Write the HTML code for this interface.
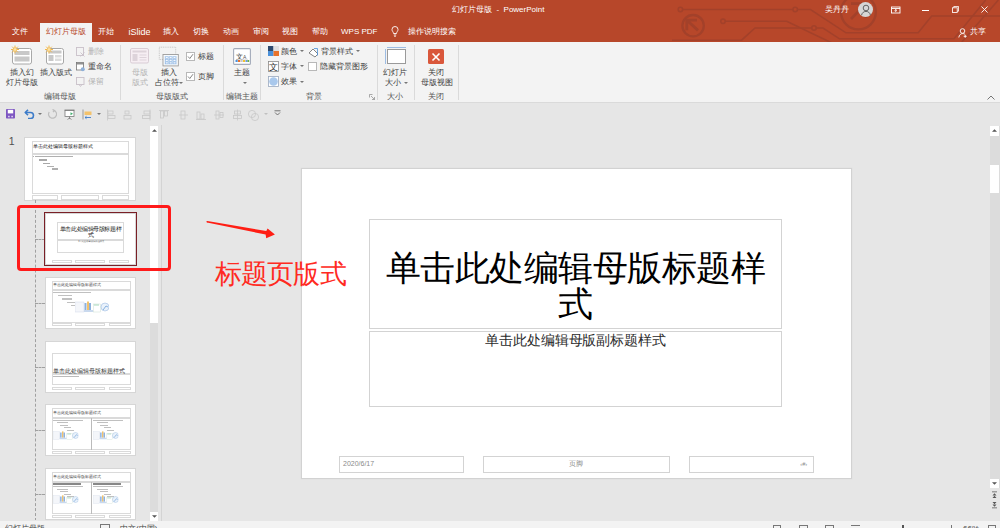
<!DOCTYPE html>
<html><head><meta charset="utf-8">
<style>
*{box-sizing:border-box;margin:0;padding:0}
html,body{width:1000px;height:528px;overflow:hidden;background:#E6E6E6;font-family:"Liberation Sans",sans-serif;color:#444}
.a{position:absolute;white-space:nowrap}
#top{position:absolute;left:0;top:0;width:1000px;height:42px;background:#B7472A;overflow:hidden}
#ribbon{position:absolute;left:0;top:42px;width:1000px;height:61px;background:#F3F3F3;border-bottom:1px solid #DADADA}
#qat{position:absolute;left:0;top:103px;width:1000px;height:22px;background:#E6E6E6}
#status{position:absolute;left:0;top:521px;width:1000px;height:7px;background:#F3F3F3}
.tab{position:absolute;top:26px;font-size:8px;line-height:12px;color:#fff}
.t8{font-size:8px;line-height:10px}
.sep{position:absolute;width:1px;background:#DADADA}
.glabel{position:absolute;top:49px;font-size:8px;line-height:11px;color:#555}
.dis{color:#B4B4B4}
.dd{display:inline-block;width:0;height:0;border-left:2px solid transparent;border-right:2px solid transparent;border-top:2px solid #777;vertical-align:middle;margin-left:1px}
#slide{position:absolute;left:301.5px;top:169px;width:549px;height:309px;background:#fff;box-shadow:0 0 1px 1px #D2D2D2}
.dot{position:absolute;border:1px solid #D3D3D3}
.thumb{position:absolute;background:#fff;box-shadow:0 0 0 1px #D6D6D6;overflow:hidden}
.thumb .dot{border:1px solid #DADADA}
.tt{position:absolute;white-space:nowrap;color:#777;line-height:4px}
</style></head><body>

<div id="top">
  <svg class="a" style="left:0;top:0" width="1000" height="42" viewBox="0 0 1000 42" fill="none" stroke="#A3412A" stroke-width="1.6">
    <circle cx="680.4" cy="9.5" r="2.2"/><path d="M682.6 9.5H793"/><circle cx="795.2" cy="9.5" r="2.2"/><path d="M797.4 9.5H810.5L846 32.8H918.2L931.7 16H1000"/>
    <circle cx="693.1" cy="25.7" r="10.7" stroke-width="2.3"/><path d="M687.2 20.5L698 30.4M686.8 30.2V20.1H697" stroke-width="2.8"/>
    <circle cx="723" cy="21.3" r="2.2"/><path d="M725.2 21.3H786.7L832 43"/>
    <path d="M672 40.2H741.6L755 28H811.8"/><circle cx="814" cy="28" r="2.2"/><path d="M816.2 28H823L839.5 38.8H954L985.7 0"/>
    <circle cx="858.4" cy="12" r="17.4" stroke-width="2.4"/><path d="M851 3.6H866V18M866 3.6L851 19" stroke-width="2.6"/>
    <path d="M961.8 42L998.4 0"/>
  </svg>
  <div class="a" style="left:452px;top:4px;font-size:8px;line-height:12px;color:#fff">幻灯片母版&nbsp; - &nbsp;PowerPoint</div>
  <div class="a" style="left:825px;top:4px;font-size:8px;line-height:12px;color:#fff">吴丹丹</div>
  <div class="a" style="left:858px;top:2px;width:15.4px;height:15.4px;border-radius:50%;background:#D6D6D6"></div>
  <svg class="a" style="left:858px;top:2px" width="16" height="16" viewBox="0 0 16 16" fill="none" stroke="#555" stroke-width="0.9"><circle cx="8" cy="6" r="2.8"/><path d="M3.5 13.2C4.2 10.5 6 9.4 8 9.4S11.8 10.5 12.5 13.2"/></svg>
  <svg class="a" style="left:890.5px;top:6px" width="10" height="8" viewBox="0 0 10 8" fill="none" stroke="#fff" stroke-width="0.9"><rect x="0.5" y="1" width="8.5" height="6"/><path d="M0.5 2.5h8.5M4.75 3.5v2.5M3.5 4.7l1.25-1.2 1.25 1.2"/></svg>
  <div class="a" style="left:922px;top:9.8px;width:7px;height:0.8px;background:#fff"></div>
  <svg class="a" style="left:952px;top:6.3px" width="7" height="7" viewBox="0 0 7 7" fill="none" stroke="#fff" stroke-width="0.85"><rect x="0.45" y="1.8" width="4.75" height="4.75"/><path d="M1.8 1.8V0.45H6.55V5.2H5.2"/></svg>
  <svg class="a" style="left:981.3px;top:6.2px" width="7" height="7" viewBox="0 0 8 8" stroke="#fff" stroke-width="1"><path d="M0.5 0.5L7.5 7.5M7.5 0.5L0.5 7.5"/></svg>
  <svg class="a" style="left:958px;top:27.5px" width="10" height="10" viewBox="0 0 10 10" fill="none" stroke="#fff" stroke-width="0.9"><circle cx="4.5" cy="3" r="2.3"/><path d="M0.8 9.5C1.2 7 2.8 5.6 4.5 5.6S6.5 6 7 6.5M7.2 6.8v3M5.7 8.3h3"/></svg>
  <div class="a" style="left:969.5px;top:26px;font-size:8px;line-height:12px;color:#fff">共享</div>

  <div class="a" style="left:39.5px;top:22.5px;width:52.5px;height:20px;background:#F3F3F3"></div>
  <div class="tab" style="left:11.5px">文件</div>
  <div class="tab" style="left:46px;color:#B7472A">幻灯片母版</div>
  <div class="tab" style="left:98px">开始</div>
  <div class="tab" style="left:128.5px;font-size:9px">iSlide</div>
  <div class="tab" style="left:163px">插入</div>
  <div class="tab" style="left:193px">切换</div>
  <div class="tab" style="left:223px">动画</div>
  <div class="tab" style="left:253px">审阅</div>
  <div class="tab" style="left:282px">视图</div>
  <div class="tab" style="left:312px">帮助</div>
  <div class="tab" style="left:341px">WPS PDF</div>
  <svg class="a" style="left:391px;top:26px" width="8" height="11" viewBox="0 0 8 11" fill="none" stroke="#fff" stroke-width="0.9"><path d="M2.5 7.5C2.5 6 1 5.2 1 3.5A3 3 0 0 1 7 3.5C7 5.2 5.5 6 5.5 7.5Z"/><path d="M2.8 9H5.2M3.2 10.3H4.8"/></svg>
  <div class="tab" style="left:408px">操作说明搜索</div>
</div>
<div id="ribbon">
  <!-- group 1 -->
  <svg class="a" style="left:10px;top:3px" width="24" height="20" viewBox="0 0 24 20">
    <rect x="2.5" y="3.5" width="19" height="15.5" rx="2" fill="#fff" stroke="#A8A8A8"/>
    <rect x="4.5" y="6" width="15" height="4" fill="#C8C8C8"/><rect x="4.5" y="11.5" width="15" height="5" fill="#C8C8C8"/>
    <g stroke="#F2B84B" stroke-width="1"><path d="M5 0.5v8M1 4.5h8M2.2 1.7l5.6 5.6M7.8 1.7l-5.6 5.6"/></g><circle cx="5" cy="4.5" r="1.8" fill="#FBE3A8" stroke="#F2B84B" stroke-width="0.6"/>
  </svg>
  <svg class="a" style="left:44px;top:3px" width="22" height="20" viewBox="0 0 22 20">
    <rect x="2.5" y="3.5" width="17" height="15.5" rx="2" fill="#fff" stroke="#A8A8A8"/>
    <rect x="4.5" y="5.5" width="13" height="3" fill="#C8C8C8"/><rect x="4.5" y="10" width="5" height="6" fill="#C8C8C8"/><rect x="11" y="10" width="6.5" height="2.5" fill="#DCDCDC"/><rect x="11" y="13.5" width="6.5" height="2.5" fill="#DCDCDC"/>
    <g stroke="#F2B84B" stroke-width="1"><path d="M5 0.5v8M1 4.5h8M2.2 1.7l5.6 5.6M7.8 1.7l-5.6 5.6"/></g><circle cx="5" cy="4.5" r="1.8" fill="#FBE3A8" stroke="#F2B84B" stroke-width="0.6"/>
  </svg>
  <div class="a t8" style="left:10px;top:26px">插入幻</div>
  <div class="a t8" style="left:6px;top:36px">灯片母版</div>
  <div class="a t8" style="left:40px;top:26px">插入版式</div>
  <svg class="a" style="left:76px;top:5px" width="10" height="10" viewBox="0 0 10 10" fill="none" stroke="#C9C0C9" stroke-width="0.9"><rect x="0.5" y="0.5" width="7" height="8"/><path d="M4.5 5.5l4 4M8.5 5.5l-4 4"/></svg>
  <div class="a t8 dis" style="left:88px;top:5px">删除</div>
  <svg class="a" style="left:76px;top:20px" width="10" height="10" viewBox="0 0 10 10" fill="none" stroke="#777" stroke-width="0.8"><rect x="0.5" y="0.5" width="7" height="7.5" fill="#fff"/><path d="M0.5 1.8h7" stroke-width="1.2"/><circle cx="6.8" cy="7.3" r="2" fill="#8FB0D8" stroke="none"/></svg>
  <div class="a t8" style="left:88px;top:20px;color:#3C3C3C">重命名</div>
  <svg class="a" style="left:76px;top:35px" width="10" height="10" viewBox="0 0 10 10" fill="none" stroke="#C9C0C9" stroke-width="0.9"><rect x="0.5" y="0.5" width="7.5" height="7"/><path d="M3 7.5l1.5 2 1.5-2"/></svg>
  <div class="a t8 dis" style="left:88px;top:34.5px">保留</div>
  <div class="glabel" style="left:44px">编辑母版</div>
  <div class="sep" style="left:120px;top:3px;height:55px"></div>

  <!-- group 2 -->
  <svg class="a" style="left:130px;top:6px" width="20" height="16" viewBox="0 0 20 16"><rect x="0.5" y="0.5" width="18" height="14.5" rx="1.5" fill="#F6EEF3" stroke="#D9CDD5"/><rect x="2.5" y="2.5" width="14" height="2" fill="#DDD3DA"/><rect x="2.5" y="6" width="5" height="7" fill="#DDD3DA"/><path d="M9.5 7h7M9.5 9.5h7M9.5 12h7" stroke="#DDD3DA"/></svg>
  <div class="a t8 dis" style="left:132px;top:26px">母版</div>
  <div class="a t8 dis" style="left:132px;top:36px">版式</div>
  <svg class="a" style="left:158px;top:3.5px" width="22" height="21" viewBox="0 0 22 21"><rect x="1.3" y="1.2" width="16.4" height="12.3" fill="none" stroke="#B4B4B4" stroke-width="0.7" stroke-dasharray="1 0.8"/><rect x="5" y="8.5" width="15.3" height="11.4" fill="#fff" stroke="#9A9A9A" stroke-width="0.9"/><rect x="6.3" y="9.8" width="12.7" height="8.8" fill="#DDEAF7"/><g fill="#fff" stroke="#8DB4E2" stroke-width="0.6"><rect x="7.3" y="10.8" width="2.8" height="1.8"/><rect x="11.2" y="10.8" width="2.8" height="1.8"/><rect x="15.1" y="10.8" width="2.8" height="1.8"/><rect x="7.3" y="13.4" width="2.8" height="1.8"/><rect x="11.2" y="13.4" width="2.8" height="1.8"/><rect x="15.1" y="13.4" width="2.8" height="1.8"/><rect x="7.3" y="16" width="2.8" height="1.8"/><rect x="11.2" y="16" width="2.8" height="1.8"/><rect x="15.1" y="16" width="2.8" height="1.8"/></g></svg>
  <div class="a t8" style="left:161px;top:26px;color:#3C3C3C">插入</div>
  <div class="a t8" style="left:155px;top:36px;color:#3C3C3C">占位符<i class="dd" style="margin-left:0"></i></div>
  <div class="a" style="left:186.3px;top:10.3px;width:8.5px;height:8.5px;background:#fff;border:1px solid #B8B8B8"></div>
  <svg class="a" style="left:187px;top:11px" width="7" height="7" viewBox="0 0 7 7" fill="none" stroke="#666" stroke-width="0.8"><path d="M1 3.5l1.8 2L6 1.2"/></svg>
  <div class="a t8" style="left:198px;top:10px;color:#3C3C3C">标题</div>
  <div class="a" style="left:186.3px;top:30.3px;width:8.5px;height:8.5px;background:#fff;border:1px solid #B8B8B8"></div>
  <svg class="a" style="left:187px;top:31px" width="7" height="7" viewBox="0 0 7 7" fill="none" stroke="#666" stroke-width="0.8"><path d="M1 3.5l1.8 2L6 1.2"/></svg>
  <div class="a t8" style="left:198px;top:30px;color:#3C3C3C">页脚</div>
  <div class="glabel" style="left:156px">母版版式</div>
  <div class="sep" style="left:223px;top:3px;height:55px"></div>

  <!-- group 3 -->
  <svg class="a" style="left:233px;top:5.5px" width="18" height="17" viewBox="0 0 18 17"><rect x="0.6" y="0.6" width="16.8" height="15.8" rx="1" fill="#fff" stroke="#A3ABBA" stroke-width="1.1"/><text x="3" y="10.5" font-size="6.5" fill="#333" font-family="Liberation Sans">文</text><text x="10" y="10.5" font-size="5" fill="#555" font-family="Liberation Sans">A</text><path d="M3 11.3h12" stroke="#BBB" stroke-width="0.5"/><g><rect x="2.5" y="12" width="2.2" height="2" fill="#4A90D9"/><rect x="5" y="12" width="2.2" height="2" fill="#E8722A"/><rect x="7.5" y="12" width="2.2" height="2" fill="#C8C8C8"/><rect x="10" y="12" width="2.2" height="2" fill="#F2C12E"/><rect x="12.5" y="12" width="2.2" height="2" fill="#6A9BE0"/><rect x="14.6" y="12" width="1.6" height="2" fill="#6CB33F"/></g></svg>
  <div class="a t8" style="left:234px;top:26px;color:#3C3C3C">主题</div>
  <i class="dd a" style="left:241.5px;top:40px"></i>
  <div class="glabel" style="left:226px">编辑主题</div>
  <div class="sep" style="left:260px;top:3px;height:55px"></div>

  <!-- group 4 -->
  <svg class="a" style="left:268px;top:4px" width="11" height="10" viewBox="0 0 11 10"><rect x="0" y="0" width="5.5" height="5" fill="#2E4A6E"/><rect x="5.5" y="0" width="5.5" height="5" fill="#E0E0E0"/><rect x="0" y="5" width="5.5" height="5" fill="#4A90D9"/><rect x="5.5" y="5" width="5.5" height="5" fill="#E8722A"/></svg>
  <div class="a t8" style="left:280.5px;top:4.5px;color:#3C3C3C">颜色 <i class="dd"></i></div>
  <svg class="a" style="left:268px;top:18.5px" width="11" height="11" viewBox="0 0 11 11"><rect x="0.5" y="0.5" width="10" height="10" fill="#fff" stroke="#8A8A8A" stroke-width="0.8"/><text x="1.3" y="9" font-size="8.5" fill="#333" font-family="Liberation Sans">文</text></svg>
  <div class="a t8" style="left:280.5px;top:19.5px;color:#3C3C3C">字体 <i class="dd"></i></div>
  <svg class="a" style="left:268px;top:34px" width="11" height="11" viewBox="0 0 11 11"><rect x="0.5" y="0.5" width="10" height="10" fill="#fff" stroke="#9AA9BF" stroke-width="0.8"/><circle cx="5.5" cy="5.5" r="4.3" fill="#A9C8EC"/></svg>
  <div class="a t8" style="left:280.5px;top:34.8px;color:#3C3C3C">效果 <i class="dd"></i></div>
  <svg class="a" style="left:307.5px;top:4.5px" width="12" height="11" viewBox="0 0 12 11" fill="none" stroke="#666" stroke-width="0.8"><path d="M1 6l4-4 5 5-3 3z" fill="#fff"/><path d="M6 1.5h3.5v7" stroke="#4A90D9"/></svg>
  <div class="a t8" style="left:320.5px;top:4.5px;color:#3C3C3C">背景样式 <i class="dd"></i></div>
  <div class="a" style="left:308px;top:20px;width:9px;height:9px;background:#fff;border:1px solid #B8B8B8"></div>
  <div class="a t8" style="left:320px;top:19.5px;color:#3C3C3C">隐藏背景图形</div>
  <div class="glabel" style="left:305.5px">背景</div>
  <svg class="a" style="left:368.5px;top:52px" width="6" height="6" viewBox="0 0 6 6" fill="none" stroke="#888" stroke-width="0.7"><path d="M0.5 0.5h3M0.5 0.5v3M2 2l3.5 3.5M5.5 3v2.5H3"/></svg>
  <div class="sep" style="left:376.5px;top:3px;height:55px"></div>

  <!-- group 5 -->
  <div class="a" style="left:386.5px;top:6.5px;width:19.5px;height:15px;background:#fff;border:1px solid #9A9A9A"></div>
  <div class="a" style="left:386.5px;top:4.5px;width:19px;height:1px;background:#9DBCE3"></div>
  <div class="a" style="left:385px;top:6.5px;width:1px;height:15px;background:#9DBCE3"></div>
  <div class="a t8" style="left:383px;top:26px;color:#3C3C3C">幻灯片</div>
  <div class="a t8" style="left:385px;top:36px;color:#3C3C3C">大小 <i class="dd"></i></div>
  <div class="glabel" style="left:387px">大小</div>
  <div class="sep" style="left:413.5px;top:3px;height:55px"></div>

  <!-- group 6 -->
  <div class="a" style="left:428px;top:6.5px;width:16px;height:15.5px;background:#D9573B;border-radius:1.5px"></div>
  <svg class="a" style="left:428px;top:6.5px" width="16" height="16" viewBox="0 0 16 16" stroke="#fff" stroke-width="1.6"><path d="M4.5 4.5l7 7M11.5 4.5l-7 7"/></svg>
  <div class="a t8" style="left:428px;top:26px;color:#3C3C3C">关闭</div>
  <div class="a t8" style="left:420.5px;top:36px;color:#3C3C3C">母版视图</div>
  <div class="glabel" style="left:428px">关闭</div>
  <div class="sep" style="left:457.5px;top:3px;height:55px"></div>

  <svg class="a" style="left:987px;top:53px" width="8" height="5" viewBox="0 0 8 5" fill="none" stroke="#666" stroke-width="0.9"><path d="M0.5 4.5L4 1l3.5 3.5"/></svg>
</div>
<div id="qat">
  <svg class="a" style="left:5.5px;top:6px" width="9" height="10" viewBox="0 0 9 10"><rect x="0" y="0" width="9" height="9.5" rx="0.8" fill="#7E57C2"/><rect x="1.8" y="0.8" width="5.4" height="3.6" fill="#fff"/><rect x="2.3" y="6.8" width="1.2" height="1.5" fill="#fff"/><rect x="5.5" y="6.8" width="1.2" height="1.5" fill="#fff"/></svg>
  <svg class="a" style="left:23.5px;top:6px" width="11" height="10" viewBox="0 0 11 10" fill="none" stroke="#3D7CC9" stroke-width="1.6"><path d="M1.5 3.5H6.5A3 3 0 0 1 6.5 9.5H4"/><path d="M4 0.8L1.2 3.5 4 6.2" stroke-linejoin="round"/></svg>
  <i class="dd a" style="left:37px;top:113px;top:10px"></i>
  <svg class="a" style="left:47px;top:6px" width="10" height="10" viewBox="0 0 10 10" fill="none" stroke="#BDBDBD" stroke-width="1.2"><path d="M6.5 1.3A4 4 0 1 1 2.2 3"/><path d="M5.5 0.5L7.5 1.5 6 3.2"/></svg>
  <svg class="a" style="left:64px;top:5.5px" width="11" height="11" viewBox="0 0 11 11" fill="none" stroke="#7A7A7A" stroke-width="0.8"><rect x="1" y="1.5" width="9" height="6" fill="#fff"/><path d="M0.5 1h10M5.5 7.5v2.5M3.5 10.5l2-1.5 2 1.5"/><path d="M6.5 3.2l2.5 1.5-2.5 1.5z" fill="#3FAF6E" stroke="none"/></svg>
  <svg class="a" style="left:81.5px;top:5.5px" width="10" height="11" viewBox="0 0 10 11"><rect x="0.5" y="0.5" width="1" height="10" fill="#999"/><rect x="2.5" y="2.5" width="7" height="3.5" fill="#F3C26B"/><path d="M3 8.5h6M3 8.5l1.5-1.2M3 8.5l1.5 1.2" stroke="#3D7CC9" stroke-width="0.9" fill="none"/></svg>
  <i class="dd a" style="left:95.5px;top:10px"></i>
  <g></g>
  <svg class="a" style="left:106px;top:5.5px" width="180" height="12" viewBox="0 0 180 12" fill="none" stroke="#C8C8C8" stroke-width="0.8">
    <path d="M1.5 0.5v11"/><rect x="2" y="2" width="5" height="3"/><rect x="2" y="6.5" width="7" height="3"/>
    <rect x="19" y="2" width="4" height="3"/><rect x="18" y="6.5" width="7" height="3.5"/>
    <path d="M44 0.5v11"/><rect x="38" y="2" width="6" height="3"/><rect x="36.5" y="6.5" width="7.5" height="3"/>
    <path d="M53 1.5h10"/><rect x="54.5" y="2" width="3" height="7"/><rect x="58.5" y="2" width="3" height="5"/>
    <path d="M73 6h9"/><rect x="75" y="2" width="4" height="8"/>
    <path d="M90 10.5h10"/><rect x="91" y="3" width="3" height="7"/><rect x="95" y="5" width="3" height="5"/>
    <path d="M108 6h10"/><rect x="110" y="2" width="3" height="8"/><rect x="114" y="3.5" width="3" height="5"/>
    <path d="M131.5 0.5v11"/><rect x="128.5" y="2" width="6" height="3"/><rect x="127.5" y="6.5" width="8" height="3"/>
    <circle cx="146" cy="5" r="3.6"/><circle cx="149" cy="8" r="3.6"/>
  </svg>
  <i class="dd a" style="left:262.5px;top:10px;border-top-color:#C0C0C0"></i>
  <svg class="a" style="left:273.5px;top:7px" width="7" height="6" viewBox="0 0 7 6" fill="none" stroke="#555" stroke-width="0.8"><path d="M0.5 0.8h6"/><path d="M1 2.5L3.5 5 6 2.5"/></svg>
</div>

<!-- slide panel -->
<div class="a" style="left:8.8px;top:133.5px;font-size:10.5px;line-height:14px;color:#505050">1</div>
<div class="thumb" style="left:24.5px;top:137.5px;width:110.5px;height:62.5px">
  <div class="dot" style="left:7px;top:3.8px;width:97px;height:12.5px"></div>
  <div class="a" style="left:8px;top:5.8px;font-size:5.3px;line-height:7px;color:#222">单击此处编辑母版标题样式</div>
  <div class="dot" style="left:7px;top:16.3px;width:97px;height:40.5px"></div>
  <div class="a" style="left:8.5px;top:18px;width:1px;height:1px;background:#B0B0B0"></div>
  <div class="a" style="left:10.75px;top:18px;width:38px;height:1.5px;background:#B0B0B0"></div>
  <div class="a" style="left:14.75px;top:21.5px;width:8px;height:1.5px;background:#A8A8A8"></div>
  <div class="a" style="left:18.5px;top:25px;width:7px;height:1.5px;background:#A8A8A8"></div>
  <div class="a" style="left:22.75px;top:28px;width:6.5px;height:1.5px;background:#B0B0B0"></div>
  <div class="a" style="left:27px;top:30.5px;width:6.5px;height:1.5px;background:#B0B0B0"></div>
  <div class="dot" style="left:7px;top:57px;width:26.5px;height:5px"></div>
  <div class="dot" style="left:36.5px;top:57px;width:37.5px;height:5px"></div>
  <div class="dot" style="left:77.5px;top:57px;width:27px;height:5px"></div>
</div>
<div class="a" style="left:35px;top:200px;width:0;height:321px;border-left:1px dashed #A0A0A0"></div>
<div class="a" style="left:35px;top:238.5px;width:10px;height:0;border-top:1px dashed #A0A0A0"></div>
<div class="a" style="left:35px;top:302.5px;width:10px;height:0;border-top:1px dashed #A0A0A0"></div>
<div class="a" style="left:35px;top:366.5px;width:10px;height:0;border-top:1px dashed #A0A0A0"></div>
<div class="a" style="left:35px;top:430px;width:10px;height:0;border-top:1px dashed #A0A0A0"></div>
<div class="a" style="left:35px;top:494px;width:10px;height:0;border-top:1px dashed #A0A0A0"></div>
<div class="a" style="left:43.8px;top:211.8px;width:93.4px;height:54.2px;border:2.4px solid #7A1F26;background:#fff"></div>
<div class="thumb" style="left:46px;top:214px;width:89px;height:50px">
  <div class="dot" style="left:11px;top:8px;width:67px;height:18px"></div>
  <div class="dot" style="left:11px;top:26.3px;width:67px;height:12.3px"></div>
  <div class="a" style="left:11px;top:11.6px;width:67px;text-align:center;font-size:6px;line-height:7px;color:#222;white-space:normal;transform:scale(0.93);transform-origin:50% 0">单击此处编辑母版标题样<br>式</div>
  <div class="a" style="left:11px;top:26.3px;width:67px;text-align:center;font-size:2.15px;line-height:3.5px;color:#555">单击此处编辑母版副标题样式</div>
  <div class="dot" style="left:6px;top:46.4px;width:20px;height:3px"></div>
  <div class="dot" style="left:29px;top:46.4px;width:30px;height:3px"></div>
  <div class="dot" style="left:62.5px;top:46.4px;width:20px;height:3px"></div>
</div><div class="thumb" style="left:46px;top:277.5px;width:89px;height:50px">
  <div class="dot" style="left:5.5px;top:3px;width:79px;height:9.5px"></div>
  <div class="a" style="left:7px;top:4.5px;font-size:4.3px;line-height:6px;color:#444">单击此处编辑母版标题样式</div>
  <div class="dot" style="left:5.5px;top:12.5px;width:79px;height:32.5px"></div><div class="a" style="left:7.0px;top:14.5px;width:38.0px;height:1.3px;background:#C0C0C0"></div><div class="a" style="left:11.5px;top:17.7px;width:14.0px;height:1.3px;background:#C0C0C0"></div><div class="a" style="left:16.0px;top:20.9px;width:10.0px;height:1.3px;background:#C0C0C0"></div><div class="a" style="left:20.5px;top:24.1px;width:9.0px;height:1.3px;background:#C0C0C0"></div><div class="a" style="left:25.0px;top:27.3px;width:8.0px;height:1.3px;background:#C0C0C0"></div><svg class="a" style="left:29px;top:23px" width="34" height="12" viewBox="0 0 34 12"><rect x="0" y="1" width="9" height="10" fill="#F4F6FA" stroke="#C9D3E3" stroke-width="0.4"/><rect x="9.5" y="2" width="2" height="7" fill="#8DB1DE"/><rect x="12" y="0.5" width="2" height="8.5" fill="#F3C26B"/><rect x="14" y="2" width="2" height="7" fill="#8DB1DE"/><rect x="9" y="9" width="9" height="2" fill="#C9D9EE"/><rect x="18.5" y="3" width="7" height="8" fill="#fff" stroke="#BFD6C8" stroke-width="0.4"/><path d="M19 4h5" stroke="#6CBF8E" stroke-width="0.6"/><circle cx="30" cy="6" r="4" fill="#EAF2FB" stroke="#8DB1DE" stroke-width="0.5"/><path d="M28 9l3-4 2 1" stroke="#6C9FD8" stroke-width="0.8" fill="none"/></svg>
  <div class="dot" style="left:5.5px;top:45.5px;width:20px;height:3px"></div>
  <div class="dot" style="left:29px;top:45.5px;width:30px;height:3px"></div>
  <div class="dot" style="left:62.5px;top:45.5px;width:22px;height:3px"></div>
</div><div class="thumb" style="left:46px;top:341.5px;width:89px;height:50px">
  <div class="dot" style="left:5.5px;top:11.5px;width:79px;height:21px"></div>
  <div class="dot" style="left:5.5px;top:32.5px;width:79px;height:11px"></div>
  <div class="a" style="left:7px;top:25px;font-size:5.7px;line-height:8px;color:#333">单击此处编辑母版标题样式</div>
  <div class="a" style="left:7px;top:34px;width:26px;height:0.8px;background:#BBB"></div>
  <div class="dot" style="left:5.5px;top:45.5px;width:20px;height:3px"></div>
  <div class="dot" style="left:29px;top:45.5px;width:30px;height:3px"></div>
  <div class="dot" style="left:62.5px;top:45.5px;width:22px;height:3px"></div>
</div><div class="thumb" style="left:46px;top:405px;width:89px;height:50px">
  <div class="dot" style="left:5.5px;top:3px;width:79px;height:9.5px"></div>
  <div class="a" style="left:7px;top:4.5px;font-size:4.3px;line-height:6px;color:#444">单击此处编辑母版标题样式</div>
  <div class="dot" style="left:5.5px;top:12.5px;width:79px;height:32.5px"></div><div class="a" style="left:45px;top:12.5px;width:0.7px;height:32.5px;background:#BBB"></div><div class="a" style="left:7.0px;top:14.5px;width:30.400000000000002px;height:1.04px;background:#C0C0C0"></div><div class="a" style="left:10.6px;top:17.060000000000002px;width:11.200000000000001px;height:1.04px;background:#C0C0C0"></div><div class="a" style="left:14.2px;top:19.62px;width:8.0px;height:1.04px;background:#C0C0C0"></div><div class="a" style="left:17.8px;top:22.18px;width:7.2px;height:1.04px;background:#C0C0C0"></div><div class="a" style="left:21.4px;top:24.740000000000002px;width:6.4px;height:1.04px;background:#C0C0C0"></div><div class="a" style="left:47.0px;top:14.5px;width:30.400000000000002px;height:1.04px;background:#C0C0C0"></div><div class="a" style="left:50.6px;top:17.060000000000002px;width:11.200000000000001px;height:1.04px;background:#C0C0C0"></div><div class="a" style="left:54.2px;top:19.62px;width:8.0px;height:1.04px;background:#C0C0C0"></div><div class="a" style="left:57.8px;top:22.18px;width:7.2px;height:1.04px;background:#C0C0C0"></div><div class="a" style="left:61.4px;top:24.740000000000002px;width:6.4px;height:1.04px;background:#C0C0C0"></div><div style="position:absolute;left:7px;top:26px;transform:scale(0.75);transform-origin:0 0"><svg class="a" style="left:0px;top:0px" width="34" height="12" viewBox="0 0 34 12"><rect x="0" y="1" width="9" height="10" fill="#F4F6FA" stroke="#C9D3E3" stroke-width="0.4"/><rect x="9.5" y="2" width="2" height="7" fill="#8DB1DE"/><rect x="12" y="0.5" width="2" height="8.5" fill="#F3C26B"/><rect x="14" y="2" width="2" height="7" fill="#8DB1DE"/><rect x="9" y="9" width="9" height="2" fill="#C9D9EE"/><rect x="18.5" y="3" width="7" height="8" fill="#fff" stroke="#BFD6C8" stroke-width="0.4"/><path d="M19 4h5" stroke="#6CBF8E" stroke-width="0.6"/><circle cx="30" cy="6" r="4" fill="#EAF2FB" stroke="#8DB1DE" stroke-width="0.5"/><path d="M28 9l3-4 2 1" stroke="#6C9FD8" stroke-width="0.8" fill="none"/></svg></div><div style="position:absolute;left:47px;top:26px;transform:scale(0.75);transform-origin:0 0"><svg class="a" style="left:0px;top:0px" width="34" height="12" viewBox="0 0 34 12"><rect x="0" y="1" width="9" height="10" fill="#F4F6FA" stroke="#C9D3E3" stroke-width="0.4"/><rect x="9.5" y="2" width="2" height="7" fill="#8DB1DE"/><rect x="12" y="0.5" width="2" height="8.5" fill="#F3C26B"/><rect x="14" y="2" width="2" height="7" fill="#8DB1DE"/><rect x="9" y="9" width="9" height="2" fill="#C9D9EE"/><rect x="18.5" y="3" width="7" height="8" fill="#fff" stroke="#BFD6C8" stroke-width="0.4"/><path d="M19 4h5" stroke="#6CBF8E" stroke-width="0.6"/><circle cx="30" cy="6" r="4" fill="#EAF2FB" stroke="#8DB1DE" stroke-width="0.5"/><path d="M28 9l3-4 2 1" stroke="#6C9FD8" stroke-width="0.8" fill="none"/></svg></div>
  <div class="dot" style="left:5.5px;top:45.5px;width:20px;height:3px"></div>
  <div class="dot" style="left:29px;top:45.5px;width:30px;height:3px"></div>
  <div class="dot" style="left:62.5px;top:45.5px;width:22px;height:3px"></div>
</div><div class="thumb" style="left:46px;top:469px;width:89px;height:50px">
  <div class="dot" style="left:5.5px;top:3px;width:79px;height:9.5px"></div>
  <div class="a" style="left:7px;top:4.5px;font-size:4.3px;line-height:6px;color:#444">单击此处编辑母版标题样式</div>
  <div class="dot" style="left:5.5px;top:12.5px;width:79px;height:32.5px"></div><div class="a" style="left:45px;top:12.5px;width:0.7px;height:32.5px;background:#BBB"></div><div class="a" style="left:7px;top:14px;width:28px;height:1.6px;background:#888"></div><div class="a" style="left:47px;top:14px;width:28px;height:1.6px;background:#888"></div><div class="a" style="left:7.0px;top:17.0px;width:30.400000000000002px;height:1.04px;background:#C0C0C0"></div><div class="a" style="left:10.6px;top:19.560000000000002px;width:11.200000000000001px;height:1.04px;background:#C0C0C0"></div><div class="a" style="left:14.2px;top:22.12px;width:8.0px;height:1.04px;background:#C0C0C0"></div><div class="a" style="left:17.8px;top:24.68px;width:7.2px;height:1.04px;background:#C0C0C0"></div><div class="a" style="left:21.4px;top:27.240000000000002px;width:6.4px;height:1.04px;background:#C0C0C0"></div><div class="a" style="left:47.0px;top:17.0px;width:30.400000000000002px;height:1.04px;background:#C0C0C0"></div><div class="a" style="left:50.6px;top:19.560000000000002px;width:11.200000000000001px;height:1.04px;background:#C0C0C0"></div><div class="a" style="left:54.2px;top:22.12px;width:8.0px;height:1.04px;background:#C0C0C0"></div><div class="a" style="left:57.8px;top:24.68px;width:7.2px;height:1.04px;background:#C0C0C0"></div><div class="a" style="left:61.4px;top:27.240000000000002px;width:6.4px;height:1.04px;background:#C0C0C0"></div><div style="position:absolute;left:7px;top:26px;transform:scale(0.75);transform-origin:0 0"><svg class="a" style="left:0px;top:0px" width="34" height="12" viewBox="0 0 34 12"><rect x="0" y="1" width="9" height="10" fill="#F4F6FA" stroke="#C9D3E3" stroke-width="0.4"/><rect x="9.5" y="2" width="2" height="7" fill="#8DB1DE"/><rect x="12" y="0.5" width="2" height="8.5" fill="#F3C26B"/><rect x="14" y="2" width="2" height="7" fill="#8DB1DE"/><rect x="9" y="9" width="9" height="2" fill="#C9D9EE"/><rect x="18.5" y="3" width="7" height="8" fill="#fff" stroke="#BFD6C8" stroke-width="0.4"/><path d="M19 4h5" stroke="#6CBF8E" stroke-width="0.6"/><circle cx="30" cy="6" r="4" fill="#EAF2FB" stroke="#8DB1DE" stroke-width="0.5"/><path d="M28 9l3-4 2 1" stroke="#6C9FD8" stroke-width="0.8" fill="none"/></svg></div><div style="position:absolute;left:47px;top:26px;transform:scale(0.75);transform-origin:0 0"><svg class="a" style="left:0px;top:0px" width="34" height="12" viewBox="0 0 34 12"><rect x="0" y="1" width="9" height="10" fill="#F4F6FA" stroke="#C9D3E3" stroke-width="0.4"/><rect x="9.5" y="2" width="2" height="7" fill="#8DB1DE"/><rect x="12" y="0.5" width="2" height="8.5" fill="#F3C26B"/><rect x="14" y="2" width="2" height="7" fill="#8DB1DE"/><rect x="9" y="9" width="9" height="2" fill="#C9D9EE"/><rect x="18.5" y="3" width="7" height="8" fill="#fff" stroke="#BFD6C8" stroke-width="0.4"/><path d="M19 4h5" stroke="#6CBF8E" stroke-width="0.6"/><circle cx="30" cy="6" r="4" fill="#EAF2FB" stroke="#8DB1DE" stroke-width="0.5"/><path d="M28 9l3-4 2 1" stroke="#6C9FD8" stroke-width="0.8" fill="none"/></svg></div>
  <div class="dot" style="left:5.5px;top:45.5px;width:20px;height:3px"></div>
  <div class="dot" style="left:29px;top:45.5px;width:30px;height:3px"></div>
  <div class="dot" style="left:62.5px;top:45.5px;width:22px;height:3px"></div>
</div>
<div class="a" style="left:0;top:520px;width:162px;height:2px;background:#E6E6E6"></div>
<!-- left scrollbar -->
<div class="a" style="left:149.5px;top:126px;width:8.7px;height:395px;background:#DCDCDC"></div>
<div class="a" style="left:149.5px;top:126px;width:8.7px;height:9.5px;background:#fff"></div>
<svg class="a" style="left:149.5px;top:126px" width="9" height="9" viewBox="0 0 9 9"><path d="M2 5.8h5L4.5 3.2z" fill="#555"/></svg>
<div class="a" style="left:149.5px;top:136px;width:8.7px;height:187px;background:#fff"></div>
<div class="a" style="left:149.5px;top:512px;width:8.7px;height:8.5px;background:#fff"></div>
<svg class="a" style="left:149.5px;top:512px" width="9" height="9" viewBox="0 0 9 9"><path d="M2 3.2h5L4.5 5.8z" fill="#555"/></svg>
<div class="a" style="left:161px;top:125px;width:1px;height:396px;background:#D4D4D4"></div>

<!-- annotation -->
<div class="a" style="z-index:5;left:16.8px;top:205.3px;width:154.2px;height:65.5px;border:3.8px solid #FF1A1A;border-radius:4px"></div>
<svg class="a" style="left:200px;top:210px;z-index:5" width="90" height="40" viewBox="0 0 90 40"><path d="M7.35 10.91L66.3 21.06L67.6 18.6L74.9 24.6L66.2 28.3L65.63 24.6L7.05 12.49Z" fill="#FF1E14"/><circle cx="7.2" cy="11.7" r="0.8" fill="#FF1E14"/></svg>
<div class="a" style="z-index:5;left:214.5px;top:257.5px;font-size:27px;letter-spacing:-0.7px;line-height:32px;color:#FF2A22">标题页版式</div>

<!-- right scrollbar -->
<div class="a" style="left:989.5px;top:126px;width:10px;height:362px;background:#DCDCDC"></div>
<div class="a" style="left:990px;top:126.3px;width:9.3px;height:9.3px;background:#fff"></div>
<svg class="a" style="left:990px;top:126.3px" width="9" height="9" viewBox="0 0 9 9"><path d="M2 5.8h5L4.5 3.2z" fill="#555"/></svg>
<div class="a" style="left:990px;top:164.8px;width:9.3px;height:27.8px;background:#fff"></div>
<div class="a" style="left:990px;top:478.5px;width:9.3px;height:9px;background:#fff"></div>
<svg class="a" style="left:990px;top:478.5px" width="9" height="9" viewBox="0 0 9 9"><path d="M2 3.2h5L4.5 5.8z" fill="#555"/></svg>
<svg class="a" style="left:990px;top:490px" width="9" height="20" viewBox="0 0 9 20" fill="#555"><path d="M2 1.5h5v0.8H2z M2.5 5.5L4.5 3.2 6.5 5.5z M2.5 8L4.5 5.7 6.5 8z"/><path d="M2.5 12L4.5 14.3 6.5 12z M2.5 14.5L4.5 16.8 6.5 14.5z M2 17.5h5v0.8H2z"/></svg>

<div id="slide">
  <div class="dot" style="left:67.5px;top:50px;width:413px;height:109.5px"></div>
  <div class="dot" style="left:67.5px;top:162px;width:413px;height:76px"></div>
  <div class="a" id="ttl" style="left:67.5px;top:80.8px;width:413px;text-align:center;font-size:35px;letter-spacing:-0.5px;line-height:36.6px;color:#000;white-space:normal;font-weight:500">单击此处编辑母版标题样<br>式</div>
  <div class="a" id="sub" style="left:67.5px;top:163.2px;width:413px;text-align:center;font-size:14px;letter-spacing:-0.12px;line-height:17px;color:#2A2A2A;font-weight:500">单击此处编辑母版副标题样式</div>
  <div class="dot" style="left:37.5px;top:286.5px;width:124.5px;height:17px"></div>
  <div class="dot" style="left:181px;top:286.5px;width:187px;height:17px"></div>
  <div class="dot" style="left:387px;top:286.5px;width:125px;height:17px"></div>
  <div class="a" style="left:41.5px;top:290px;font-size:7px;line-height:10px;color:#8A8A8A">2020/6/17</div>
  <div class="a" style="left:181px;top:290px;width:187px;text-align:center;font-size:7px;line-height:10px;color:#8A8A8A">页脚</div>
  <div class="a" style="left:498.8px;top:290px;font-size:5.5px;line-height:10px;color:#8A8A8A">‹#›</div>
</div>

<div id="status">
  <div class="a" style="left:5px;top:2.5px;font-size:8px;line-height:10px;color:#444">幻灯片母版</div>
  <div class="a" style="left:100px;top:3px;width:10px;height:7px;border:1px solid #777"></div>
  <div class="a" style="left:120px;top:2.5px;font-size:8px;line-height:10px;color:#444">中文(中国)</div>
  <div class="a" style="left:773px;top:3.5px;width:8px;height:6px;border:1px solid #777"></div>
  <div class="a" style="left:799px;top:3.5px;width:9px;height:6px;border:1px solid #777"></div>
  <div class="a" style="left:825px;top:3.5px;width:9px;height:6px;border:1px solid #777"></div>
  <div class="a" style="left:851px;top:3.5px;width:9px;height:6px;border-top:1.5px solid #777"></div>
  <div class="a" style="left:901.5px;top:3.5px;width:2.5px;height:6px;background:#555"></div>
  <div class="a" style="left:951px;top:4px;width:1px;height:4px;background:#777"></div>
  <div class="a" style="left:963px;top:2.5px;font-size:8px;line-height:10px;color:#444">66%</div>
  <div class="a" style="left:988px;top:3.5px;width:8px;height:6px;border:1px solid #777"></div>
</div>
</body></html>
